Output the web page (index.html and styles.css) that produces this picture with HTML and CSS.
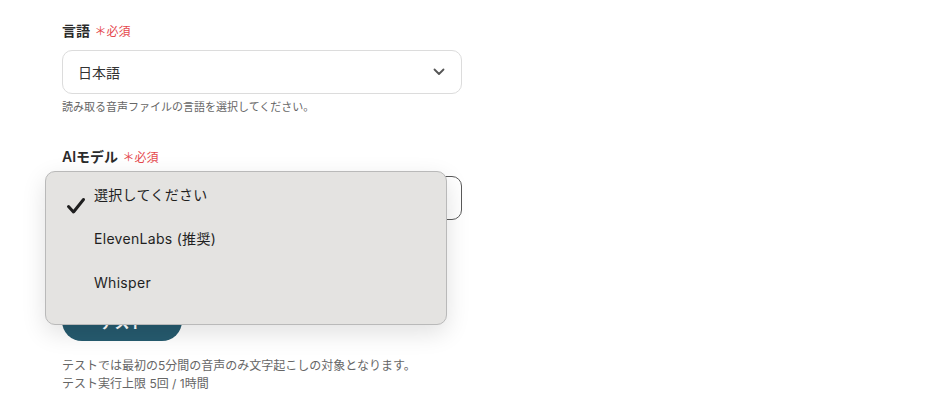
FILE: index.html
```html
<!DOCTYPE html>
<html lang="ja">
<head>
    <meta charset="UTF-8">
    <meta name="viewport" content="width=device-width, initial-scale=1.0">
    <title>AI文字起こし設定</title>
    <link rel="stylesheet" href="styles.css">
</head>
<body>

    <div class="form">
        <div class="field">
            <label class="label">言語 <span class="required">＊必須</span></label>
            <div class="select">
                <span class="select-value">日本語</span>
                <svg class="chevron" width="12" height="8" viewBox="0 0 12 8"><path d="M1.5 1.5 6 6l4.5-4.5" fill="none" stroke="#555" stroke-width="1.8" stroke-linecap="round" stroke-linejoin="round"/></svg>
            </div>
            <p class="help">読み取る音声ファイルの言語を選択してください。</p>
        </div>

        <div class="field field-model">
            <label class="label">AIモデル <span class="required">＊必須</span></label>
            <!-- value is covered by the open menu -->
            <div class="select select-open"></div>

            <ul class="menu">
                <li class="menu-item">
                    <svg class="check" width="20" height="18" viewBox="0 0 20 18"><path d="M2.5 9.5 7.5 15 17.5 2.5" fill="none" stroke="#1f1f1f" stroke-width="3" stroke-linecap="round" stroke-linejoin="round"/></svg>
                    <span>選択してください</span>
                </li>
                <li class="menu-item"><span>ElevenLabs (推奨)</span></li>
                <li class="menu-item"><span>Whisper</span></li>
            </ul>
        </div>

        <button class="test-button">テスト</button>
        <p class="help help-test">テストでは最初の5分間の音声のみ文字起こしの対象となります。<br>テスト実行上限 5回 / 1時間</p>
    </div>

</body>
</html>
```

FILE: styles.css
```css
body {
    font-family: Inter, "Noto Sans CJK JP", sans-serif;
    background-color: #fff;
    color: #333;
    margin: 0;
    padding: 0;
}

.form {
    width: 400px;
    padding: 21px 0 0 62px;
}

.field {
    position: relative;
    margin-bottom: 31px;
}

.field-model {
    margin-bottom: 81px;
}

.label {
    display: block;
    font-size: 14px;
    font-weight: 600;
    color: #2b2b2b;
    line-height: 20px;
    margin-bottom: 8px;
}

.required {
    font-size: 12px;
    font-weight: 400;
    color: #e5484d;
    margin-left: 1px;
}

.select {
    height: 42px;
    border: 1px solid #dcdcdc;
    border-radius: 10px;
    display: flex;
    align-items: center;
    justify-content: space-between;
    padding: 0 16px 0 15px;
}

.select-open {
    border-color: #5a5a5a;
}

.select-value {
    font-size: 14px;
    color: #333;
}

.help {
    font-size: 11px;
    color: #666;
    margin: 4px 0 0;
    line-height: 18px;
}

.menu {
    position: absolute;
    left: -17px;
    top: 24px;
    width: 400px;
    height: 152px;
    margin: 0;
    padding: 0;
    list-style: none;
    background-color: #e4e3e1;
    border: 1px solid #b9b9b9;
    border-radius: 10px;
    box-shadow: 0 8px 24px rgba(0, 0, 0, 0.12);
}

.menu-item {
    position: relative;
    height: 44px;
    padding-left: 48px;
    font-size: 14px;
    color: #1f1f1f;
    letter-spacing: 0.3px;
    line-height: 44px;
}

.menu-item:first-child {
    margin-top: 1px;
}

.check {
    position: absolute;
    left: 20px;
    top: 24px;
}

.test-button {
    display: block;
    width: 120px;
    height: 40px;
    border: none;
    border-radius: 20px;
    background-color: #265b6f;
    color: #fff;
    font-family: inherit;
    font-size: 15px;
    font-weight: 600;
}

.help-test {
    margin-top: 16px;
    font-size: 12px;
}
```
